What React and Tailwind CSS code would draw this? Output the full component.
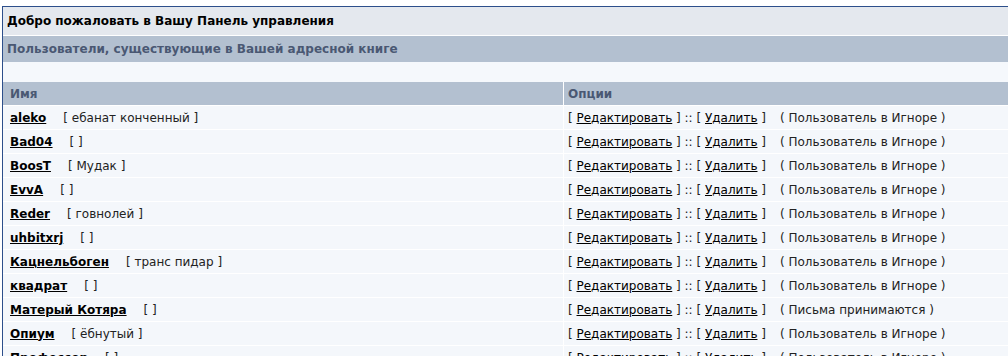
const ROWS = [
  { name: "aleko", note: "ебанат конченный", status: "Пользователь в Игноре" },
  { name: "Bad04", note: "", status: "Пользователь в Игноре" },
  { name: "BoosT", note: "Мудак", status: "Пользователь в Игноре" },
  { name: "EvvA", note: "", status: "Пользователь в Игноре" },
  { name: "Reder", note: "говнолей", status: "Пользователь в Игноре" },
  { name: "uhbitxrj", note: "", status: "Пользователь в Игноре" },
  { name: "Кацнельбоген", note: "транс пидар", status: "Пользователь в Игноре" },
  { name: "квадрат", note: "", status: "Пользователь в Игноре" },
  { name: "Матерый Котяра", note: "", status: "Письма принимаются" },
  { name: "Опиум", note: "ёбнутый", status: "Пользователь в Игноре" },
  { name: "Профессор", note: "", status: "Пользователь в Игноре" },
];

export default function App() {
  return (
    <div className="w-[1008px] h-[356px] overflow-hidden bg-white pt-[6px] pl-[2px] font-['DejaVu_Sans',Verdana,sans-serif] text-[12px] text-[#222]">
      <div className="w-[1040px] border-t border-l border-[#2d4f8b] bg-white">
        {/* шапка */}
        <div className="h-[28px] bg-[#e4e8ee] flex items-center pl-[4px] font-bold text-black">
          Добро пожаловать в Вашу Панель управления
        </div>
        <div className="h-[26px] mt-px bg-[#b3c0d0] flex items-center pl-[4px] font-bold text-[#4a5873]">
          Пользователи, существующие в Вашей адресной книге
        </div>
        <div className="h-[20px] bg-[#f5f8fc]" />

        {/* таблица */}
        <div className="grid grid-cols-[560px_1fr] gap-px bg-white">
          <div className="h-[23px] bg-[#b3c0d0] flex items-center pl-[7px] font-bold text-[#4a5873]">Имя</div>
          <div className="h-[23px] bg-[#b3c0d0] flex items-center pl-[4px] font-bold text-[#4a5873]">Опции</div>
          {ROWS.map((r) => (
            <div key={r.name} className="contents">
              <div className="h-[23px] bg-[#f4f7fb] flex items-center pl-[7px] whitespace-pre">
                <a href="#" className="font-bold text-black underline">{r.name}</a>
                <span className="ml-[17px]">[ {r.note}{r.note ? " " : ""}]</span>
              </div>
              <div className="h-[23px] bg-[#f4f7fb] flex items-center pl-[4px] whitespace-pre">
                <span>[ </span>
                <a href="#" className="text-black underline">Редактировать</a>
                <span> ] :: [ </span>
                <a href="#" className="text-black underline">Удалить</a>
                <span> ]</span>
                <span className="ml-[14px]">( {r.status} )</span>
              </div>
            </div>
          ))}
        </div>
      </div>
    </div>
  );
}
